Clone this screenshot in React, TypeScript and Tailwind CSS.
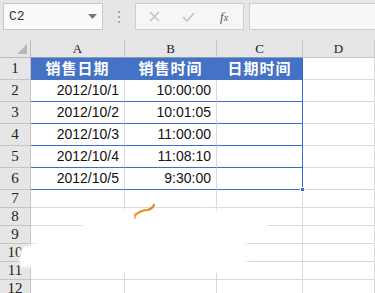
import type { JSX } from 'react';

const COLS = ['A', 'B', 'C', 'D'];
const DATA: Array<[string, string]> = [
  ['2012/10/1', '10:00:00'],
  ['2012/10/2', '10:01:05'],
  ['2012/10/3', '11:00:00'],
  ['2012/10/4', '11:08:10'],
  ['2012/10/5', '9:30:00'],
];

function FormulaBar() {
  return (
    <div className="flex h-[40px] items-start gap-0 bg-[#e6e6e6] pt-[3px]">
      <div className="ml-[3px] flex h-[27px] w-[100px] items-center justify-between border border-[#c6c6c6] bg-[#fafafa] pl-[5px] pr-[5px]">
        <span className="font-['Liberation_Mono',monospace] text-[13px] text-[#333]">C2</span>
        <svg width="9" height="6" viewBox="0 0 9 6">
          <path d="M0 0h9L4.5 5z" fill="#777" />
        </svg>
      </div>
      <div className="flex w-[32px] flex-col items-center gap-[3px] pt-[8px]">
        <span className="size-[2px] bg-[#aaa]" />
        <span className="size-[2px] bg-[#aaa]" />
        <span className="size-[2px] bg-[#aaa]" />
      </div>
      <div className="flex h-[27px] w-[109px] items-center border border-[#d0d0d0] bg-[#f6f6f6] pl-[13px]">
        <svg width="11" height="11" viewBox="0 0 11 11" className="mr-[22px]">
          <path d="M1 1l9 9M10 1l-9 9" stroke="#c4c4c4" strokeWidth="1.6" />
        </svg>
        <svg width="13" height="10" viewBox="0 0 13 10" className="mr-[25px]">
          <path d="M1 5l4 4 7-8" stroke="#c4c4c4" strokeWidth="1.6" fill="none" />
        </svg>
        <span className="font-['Liberation_Serif',serif] text-[13px] italic text-[#555]">
          f<span className="text-[10px]">x</span>
        </span>
      </div>
      <div className="ml-[5px] h-[27px] flex-1 border border-[#d0d0d0] border-r-0 bg-[#f8f8f8]" />
    </div>
  );
}

function Grid() {
  const rows: JSX.Element[] = [];
  for (let r = 1; r <= 12; r++) {
    const inTable = r <= 6;
    const h = inTable ? 'h-[22px]' : 'h-[18px]';
    rows.push(
      <div key={`h${r}`} className={`flex ${h} items-center justify-center border-r border-b border-[#c4c4c4] bg-[#e6e6e6] font-['Liberation_Serif',serif] text-[15px] text-[#222]`}>
        {r}
      </div>,
    );
    for (let c = 0; c < 4; c++) {
      let cls = `${h} border-r border-b border-[#d9d9d9]`;
      let content: string | null = null;
      if (r === 1 && c < 3) {
        cls = `${h} flex items-center justify-center border-b border-[#4472c4] bg-[#4472c4] font-['Noto_Sans_CJK_SC',sans-serif] text-[15px] font-bold tracking-[1px] text-white ${c === 2 ? 'border-r border-r-[#3a66c4]' : 'border-r border-r-[#4472c4]'}`;
        content = ['销售日期', '销售时间', '日期时间'][c];
      } else if (inTable && c < 3) {
        cls = `${h} relative flex items-center justify-end pr-[5px] border-b border-[#3f6bcb] font-['Liberation_Sans',sans-serif] text-[14px] text-[#111] ${c === 2 ? 'border-r border-r-[#3f6bcb]' : 'border-r border-r-[#d9d9d9]'}`;
        content = c === 0 ? DATA[r - 2][0] : c === 1 ? DATA[r - 2][1] : null;
      }
      rows.push(
        <div key={`${r}-${c}`} className={cls}>
          {content}
          {r === 6 && c === 2 && (
            <span className="absolute right-[-3px] bottom-[-3px] size-[5px] border border-white bg-[#3f6bcb]" />
          )}
        </div>,
      );
    }
  }

  return (
    <div className="relative grid grid-cols-[31px_94px_92px_86px_1fr]">
      <div className="relative h-[18px] border-r border-b border-[#bcbcbc] bg-[#e6e6e6]">
        <svg width="10" height="10" viewBox="0 0 10 10" className="absolute right-[3px] bottom-[3px]">
          <path d="M10 0v10H0z" fill="#b8b8b8" />
        </svg>
      </div>
      {COLS.map((l, i) => (
        <div
          key={l}
          className={`flex h-[18px] items-center justify-center border-r border-b bg-[#e6e6e6] font-['Liberation_Serif',serif] text-[13px] text-[#222] ${i < 3 ? 'border-r-[#c4c4c4] border-b-[#8a9bb8]' : 'border-[#c4c4c4]'}`}
        >
          {l}
        </div>
      ))}
      {rows}

      {/* white smudge over rows 8-11 */}
      <svg className="absolute left-0 top-0" width="375" height="260" viewBox="0 40 375 260">
        <defs>
          <filter id="soft" x="-10%" y="-10%" width="120%" height="120%">
            <feGaussianBlur stdDeviation="1.5" />
          </filter>
        </defs>
        <path
          d="M88 211L130 210L205 209L266 212L268 228L246 232L247 268L222 272L126 272L90 268L20 267L19 250L38 242L80 234L84 222z"
          fill="#ffffff"
          filter="url(#soft)"
        />
        <path d="M135 215Q141 210 148 210Q152 209 154 205" stroke="#e8881c" strokeWidth="2.2" fill="none" strokeLinecap="round" />
        <path d="M136 214l-1 4" stroke="#f0a040" strokeWidth="1.5" strokeLinecap="round" />
      </svg>
    </div>
  );
}

export default function App() {
  return (
    <div className="h-[293px] w-[375px] overflow-hidden bg-white">
      <FormulaBar />
      <Grid />
    </div>
  );
}
